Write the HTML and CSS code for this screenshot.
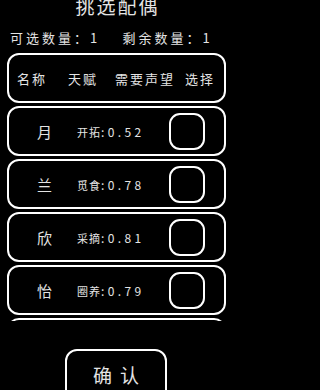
FILE: index.html
```html
<!DOCTYPE html>
<html lang="zh-CN">
<head>
<meta charset="utf-8">
<title>挑选配偶</title>
<link rel="stylesheet" href="styles.css">
</head>
<body>
<div class="title">挑选配偶</div>
<div class="counts">
  <span class="count">可选数量：1</span>
  <span class="count">剩余数量：1</span>
</div>
<div class="header">
  <span class="h h-name">名称</span>
  <span class="h h-talent">天赋</span>
  <span class="h h-need">需要声望</span>
  <span class="h">选择</span>
</div>
<div class="list">
  <div class="row">
    <span class="name">月</span>
    <span class="talent">开拓<span class="val">:0.52</span></span>
    <span class="check"></span>
  </div>
  <div class="row">
    <span class="name">兰</span>
    <span class="talent">觅食<span class="val">:0.78</span></span>
    <span class="check"></span>
  </div>
  <div class="row">
    <span class="name">欣</span>
    <span class="talent">采摘<span class="val">:0.81</span></span>
    <span class="check"></span>
  </div>
  <div class="row">
    <span class="name">怡</span>
    <span class="talent">圈养<span class="val">:0.79</span></span>
    <span class="check"></span>
  </div>
  <div class="row"></div>
</div>
<div class="confirm">确认</div>
</body>
</html>
```
FILE: styles.css
```css
html, body {
  margin: 0;
  padding: 0;
  background: #000;
}
body {
  width: 235px;
  height: 390px;
  overflow: hidden;
  font-family: "Noto Sans CJK SC", "Noto Sans", sans-serif;
  color: #e4e4e4;
}
.title {
  margin-top: -3px;
  height: 18px;
  line-height: 18px;
  font-size: 19px;
  letter-spacing: 2px;
  text-align: center;
}
.counts {
  display: flex;
  margin-top: 16px;
  padding-left: 10px;
  height: 13px;
  line-height: 13px;
  font-size: 13px;
  letter-spacing: 3px;
}
.count {
  width: 115px;
}
.header {
  box-sizing: border-box;
  margin: 9px 9px 0 7px;
  height: 50px;
  border: 2px solid #fff;
  border-radius: 12px;
  display: flex;
  align-items: center;
  padding-left: 8px;
  font-size: 13px;
  letter-spacing: 2px;
}
.h-name { width: 51px; }
.h-talent { width: 47px; }
.h-need { width: 70px; }
.list {
  margin: 3px 9px 0 7px;
  height: 215px;
  overflow: hidden;
  display: flex;
  flex-direction: column;
  gap: 3px;
}
.row {
  flex-shrink: 0;
  box-sizing: border-box;
  height: 50px;
  border: 2px solid #fff;
  border-radius: 12px;
  display: flex;
  align-items: center;
}
.name {
  margin-left: 28px;
  width: 40px;
  font-size: 15px;
}
.talent {
  flex: 1;
  font-size: 11px;
  letter-spacing: 1px;
}
.val {
  font-size: 12px;
  letter-spacing: 3.4px;
}
.check {
  box-sizing: border-box;
  width: 36px;
  height: 37px;
  margin-right: 19px;
  border: 2px solid #fff;
  border-radius: 11px;
}
.confirm {
  box-sizing: border-box;
  margin: 28px 0 0 65px;
  width: 102px;
  height: 60px;
  border: 2px solid #fff;
  border-radius: 12px;
  padding-top: 13px;
  padding-left: 8px;
  text-align: center;
  font-size: 19px;
  line-height: 22px;
  letter-spacing: 8px;
}
```
